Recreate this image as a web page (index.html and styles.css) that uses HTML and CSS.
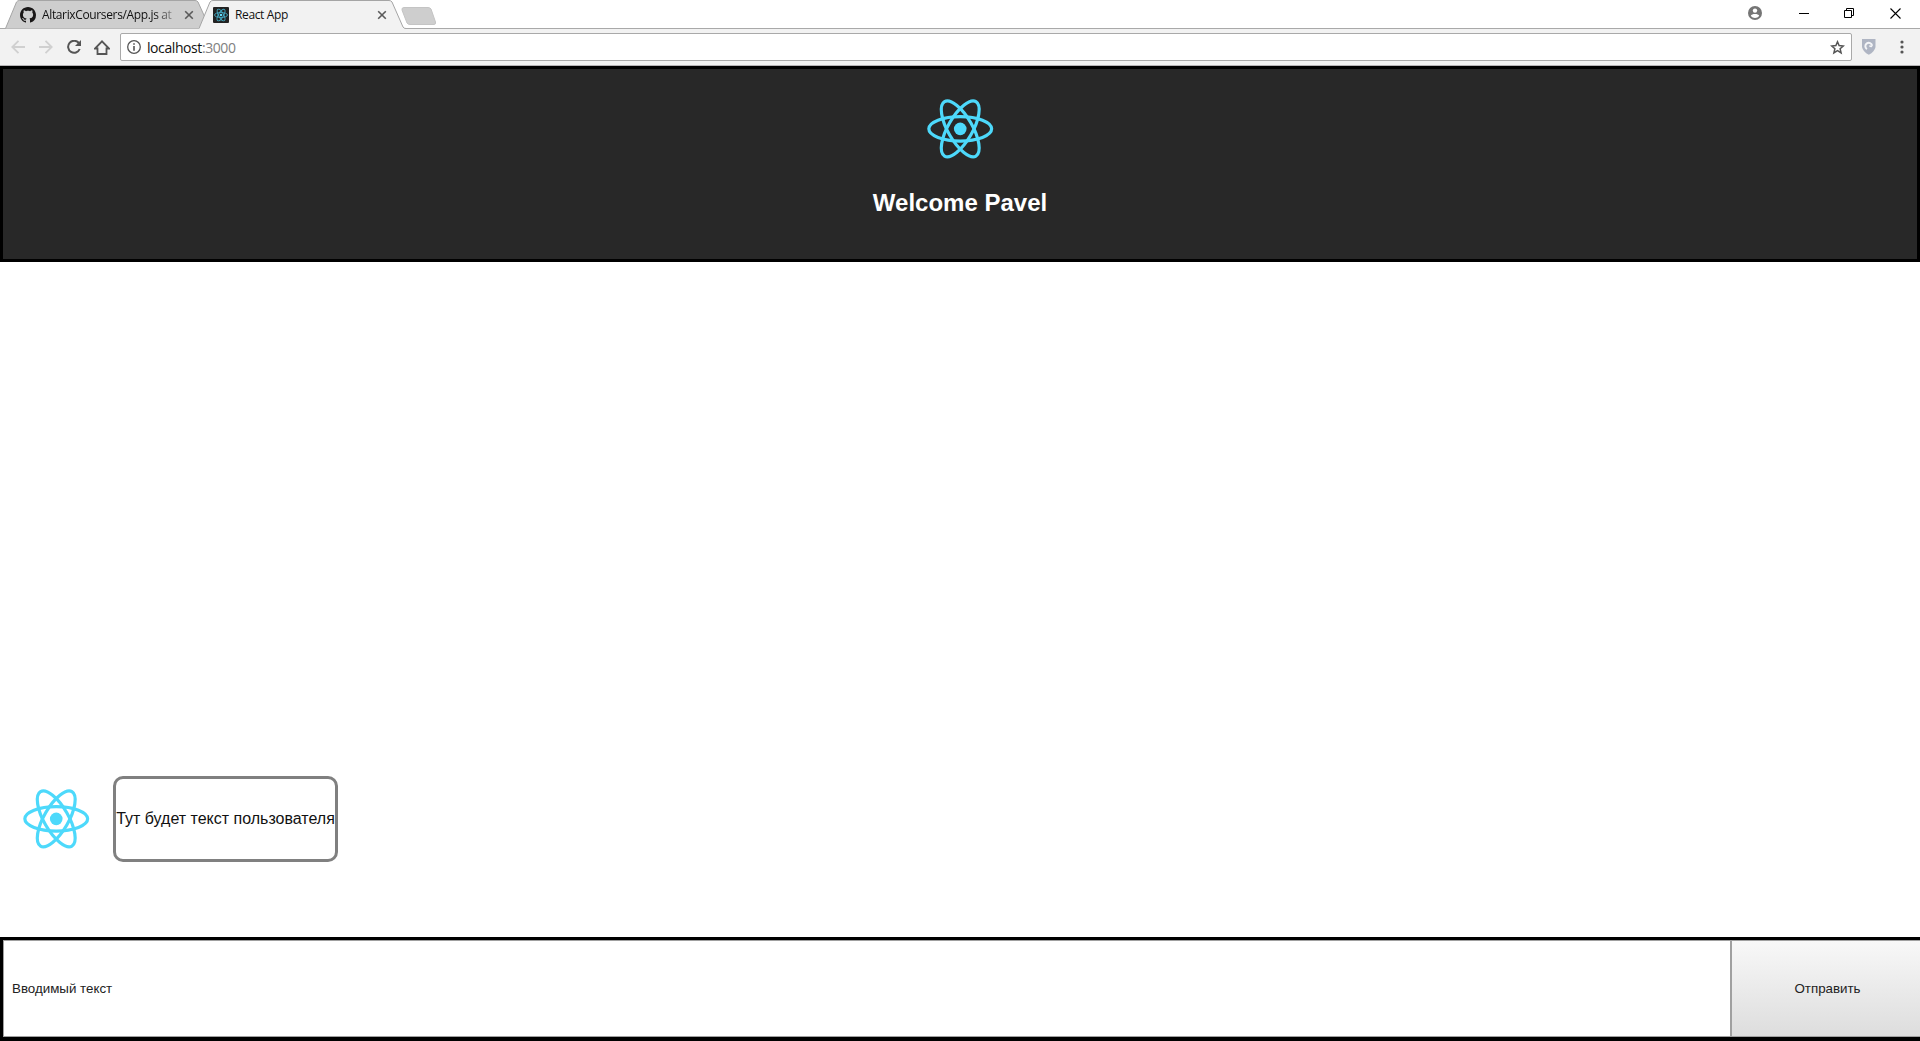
FILE: index.html
```html
<!DOCTYPE html>
<html lang="ru">
<head>
<meta charset="utf-8">
<title>React App</title>
<link rel="stylesheet" href="styles.css">
</head>
<body>
<svg class="defs" width="0" height="0">
  <symbol id="react" viewBox="0 0 842 595">
    <g fill="none" stroke="#4dd9fb" stroke-width="24">
      <ellipse cx="419" cy="296.500" rx="234" ry="91"/>
      <ellipse cx="419" cy="296.500" rx="234" ry="91" transform="rotate(60 419 296.500)"/>
      <ellipse cx="419" cy="296.500" rx="234" ry="91" transform="rotate(120 419 296.500)"/>
    </g>
    <circle cx="419" cy="296.500" r="47" fill="#4dd9fb"/>
  </symbol>
</svg>
<div class="window">
  <div class="tabstrip">
    <div class="tab tab-back">
      <svg class="tab-shape" width="207" height="29"><path d="M.500 28.500L11.500 2Q12.500 .500 14.500 .500H190Q192 .500 193 2L205 28.500" fill="#cecece" stroke="#a5a5a5"/></svg>
      <svg class="favicon" viewBox="0 0 16 16"><path fill="#191717" d="M8 0C3.580 0 0 3.580 0 8c0 3.540 2.290 6.530 5.470 7.590.400.070.550-.170.550-.380 0-.190-.010-.820-.010-1.490-2.010.370-2.530-.490-2.690-.940-.090-.230-.480-.940-.820-1.130-.280-.150-.680-.520-.010-.530.630-.010 1.080.580 1.230.820.720 1.210 1.870.870 2.330.660.070-.520.280-.870.510-1.070-1.780-.200-3.640-.890-3.640-3.950 0-.870.310-1.590.820-2.150-.080-.200-.360-1.020.080-2.120 0 0 .670-.210 2.200.820.640-.180 1.320-.270 2-.270s1.360.090 2 .270c1.530-1.040 2.200-.820 2.200-.820.440 1.100.160 1.920.080 2.120.510.560.820 1.270.820 2.150 0 3.070-1.870 3.750-3.650 3.950.290.250.540.730.540 1.480 0 1.070-.010 1.930-.010 2.200 0 .210.150.460.550.380A8.010 8.010 0 0 0 16 8c0-4.420-3.580-8-8-8z"/></svg>
      <span class="tab-title fade">AltarixCoursers/App.js at</span>
      <svg class="tab-close" viewBox="0 0 10 10"><path d="M1.200 1.200L8.800 8.800M8.800 1.200L1.200 8.800"/></svg>
    </div>
    <div class="tab tab-active">
      <svg class="tab-shape" width="207" height="30"><path d="M0 30V28.500L11 2Q12 .500 14 .500H190Q192 .500 193 2L204 27Q205 28.500 207 28.500V30" fill="#f2f2f2"/><path d="M0 28.500L11 2Q12 .500 14 .500H190Q192 .500 193 2L204 27Q205 28.500 207 28.500" fill="none" stroke="#a5a5a5"/></svg>
      <svg class="favicon" viewBox="0 0 16 16"><rect width="16" height="16" rx="1" fill="#222"/><g fill="none" stroke="#45a9c1" stroke-width=".9"><ellipse cx="8" cy="8" rx="6.500" ry="2.500"/><ellipse cx="8" cy="8" rx="6.500" ry="2.500" transform="rotate(60 8 8)"/><ellipse cx="8" cy="8" rx="6.500" ry="2.500" transform="rotate(120 8 8)"/></g><circle cx="8" cy="8" r="1.300" fill="#61dafb"/></svg>
      <span class="tab-title">React App</span>
      <svg class="tab-close" viewBox="0 0 10 10"><path d="M1.200 1.200L8.800 8.800M8.800 1.200L1.200 8.800"/></svg>
    </div>
    <svg class="new-tab" width="36" height="19"><path d="M3 .500H27Q29 .500 30 2L34.500 15Q35 17.500 33 17.500H9Q7 17.500 6 16L1 3Q.500 .500 3 .500Z" fill="#cecece" stroke="#c4c4c4"/></svg>
    <div class="window-controls">
      <svg width="14" height="14" viewBox="0 0 14 14"><circle cx="7" cy="7" r="7" fill="#757575"/><circle cx="7" cy="4.600" r="2.200" fill="#fff"/><path d="M2.800 9.800C3.500 7.500 10.500 7.500 11.200 9.800C9.200 12.700 4.800 12.700 2.800 9.800Z" fill="#fff"/></svg>
      <svg class="minimize" width="10" height="10"><path d="M0 5.500H10" stroke="#000"/></svg>
      <svg class="restore" width="10" height="10" fill="none" stroke="#000"><path d="M.500 2.500H7.500V9.500H.500ZM2.500 2.500V.500H9.500V7.500H7.500"/></svg>
      <svg class="close" width="11" height="11" stroke="#000" stroke-width="1.100"><path d="M.500 .500L10.500 10.500M10.500 .500L.500 10.500"/></svg>
    </div>
  </div>
  <div class="toolbar">
    <svg class="nav" width="14" height="14" fill="none" stroke="#d0d0d0" stroke-width="1.800"><path d="M14 7H1.500M7.500 .800L1.300 7L7.500 13.200"/></svg>
    <svg class="nav forward" width="14" height="14" fill="none" stroke="#d0d0d0" stroke-width="1.800"><path d="M0 7H12.500M6.500 .800L12.700 7L6.500 13.200"/></svg>
    <svg class="nav reload" width="14" height="14"><path d="M11.800 3A6 6 0 1 0 12.700 9" fill="none" stroke="#555" stroke-width="2"/><path d="M14 0V6H8Z" fill="#555"/></svg>
    <svg class="nav home" width="16" height="15" fill="none" stroke="#555" stroke-width="1.800"><path d="M1 8.500H3.500V14H12.500V8.500H15L8 1.400Z"/></svg>
    <div class="address">
      <svg width="14" height="14"><circle cx="7" cy="7" r="6.300" fill="none" stroke="#555" stroke-width="1.300"/><path d="M6.200 3.200H7.800V4.800H6.200ZM6.200 6H7.800V10.800H6.200Z" fill="#555"/></svg>
      <span class="url">localhost<span class="port">:3000</span></span>
      <svg class="star" width="15" height="15" fill="none" stroke="#555" stroke-width="1.500"><path d="M7.500 1.800L9.100 5.600L13.300 6L10.100 8.700L11.100 12.900L7.500 10.700L3.900 12.900L4.900 8.700L1.700 6L5.900 5.600Z"/></svg>
    </div>
    <svg class="shield" width="14" height="16"><path d="M0 0H13.500V8Q12.500 13 6.800 15.800Q1 13 0 8Z" fill="#afb5c3"/><path d="M4.900 10.100A3.400 3.400 0 1 1 10.100 6.700" fill="none" stroke="#f4f5f7" stroke-width="2"/><path d="M7 6.400L10.800 6.200L9.800 8.200L7.600 8Z" fill="#f4f5f7"/></svg>
    <svg class="menu" width="4" height="14" fill="#555"><circle cx="2" cy="2" r="1.600"/><circle cx="2" cy="7" r="1.600"/><circle cx="2" cy="12" r="1.600"/></svg>
  </div>
  <header class="app-header">
    <svg class="logo"><use href="#react"/></svg>
    <h1>Welcome Pavel</h1>
  </header>
  <main class="messages">
    <div class="message">
      <svg class="logo"><use href="#react"/></svg>
      <div class="bubble">Тут будет текст пользователя</div>
    </div>
  </main>
  <footer class="composer">
    <input class="message-input" type="text" value="Вводимый текст">
    <button class="send">Отправить</button>
    <span class="sliver"></span>
  </footer>
</div>
</body>
</html>
```
FILE: styles.css
```css
* { box-sizing: border-box; }
html { height: 1041px; overflow: hidden; }
body { margin: 0; height: 1041px; background: #fff; overflow: hidden; font-family: "Liberation Sans", Arial, sans-serif; }
svg { display: block; flex: none; }
.defs { position: absolute; }
.window { height: 1041px; display: flex; flex-direction: column; overflow: hidden; }

.tabstrip { height: 29px; flex: none; display: flex; padding-left: 5px; border-bottom: 1px solid #a9a9a9; }
.tab { position: relative; display: flex; align-items: center; height: 29px; font: 12px "Open Sans", sans-serif; color: #111; }
.tab-back { width: 194px; padding-left: 15px; }
.tab-active { width: 205px; padding-left: 14px; z-index: 1; }
.tab-shape { position: absolute; left: 0; top: 0; }
.favicon { position: relative; width: 16px; height: 16px; }
.tab-title { position: relative; width: 132px; margin-left: 6px; white-space: nowrap; overflow: hidden; letter-spacing: -.36px; }
.fade { -webkit-mask-image: linear-gradient(90deg, #000 112px, transparent 140px); mask-image: linear-gradient(90deg, #000 112px, transparent 140px); }
.tab-close { position: relative; width: 10px; height: 10px; margin-left: 10px; fill: none; stroke: #5a5a5a; stroke-width: 1.6; }
.new-tab { margin: 7px 0 0 -3px; }
.window-controls { margin-left: auto; display: flex; align-items: center; height: 26px; padding-right: 19px; }
.minimize { margin-left: 37px; }
.restore { margin-left: 35px; }
.close { margin-left: 36px; }

.toolbar { height: 37px; flex: none; display: flex; align-items: center; padding: 0 16px 0 11px; background: #f2f2f2; border-bottom: 1px solid #b6b4b6; }
.forward { margin-left: 14px; }
.reload { margin-left: 14px; }
.home { margin-left: 13px; }
.address { flex: 1; height: 28px; margin-left: 10px; padding: 0 6px; display: flex; align-items: center; background: #fff; border: 1px solid #a9a9a9; border-radius: 2px; }
.url { margin-left: 6px; font: 14px "Open Sans", sans-serif; letter-spacing: -.42px; color: #111; }
.port { color: #808080; }
.star { margin-left: auto; }
.shield { margin-left: 10px; }
.menu { margin-left: 24px; }

.app-header { height: 196px; flex: none; padding-top: 20px; display: flex; flex-direction: column; align-items: center; background: #282828; border: 3px solid #000; }
.logo { width: 113px; height: 80px; }
.app-header h1 { margin: 20px 0 0; font-size: 24px; line-height: 27px; color: #fff; }
.messages { flex: 1; display: flex; align-items: flex-end; padding-bottom: 75px; }
.message { display: flex; align-items: center; }
.bubble { width: 225px; height: 86px; display: flex; align-items: center; justify-content: center; border: 3px solid #808080; border-radius: 10px; font-size: 16px; color: #111; white-space: nowrap; }

.composer { position: relative; height: 104px; flex: none; display: flex; border: solid #000; border-width: 3px 0 4px 3px; overflow: hidden; }
.message-input { width: 1728px; flex: none; margin: 0; padding: 0 8px; border: 1px solid #a0a0a0; border-radius: 0; background: #fff; color: #222; font: 13.333px "Liberation Sans", Arial, sans-serif; outline: 0; }
.send { width: 193px; flex: none; margin: 0; padding: 0; border: 1px solid #a0a0a0; border-radius: 0; background: linear-gradient(#f8f8f8, #ddd); color: #222; font: 13.333px "Liberation Sans", Arial, sans-serif; }
.sliver { position: absolute; left: 291px; bottom: -4px; width: 48px; height: 1px; background: #3a3a3a; }
```
